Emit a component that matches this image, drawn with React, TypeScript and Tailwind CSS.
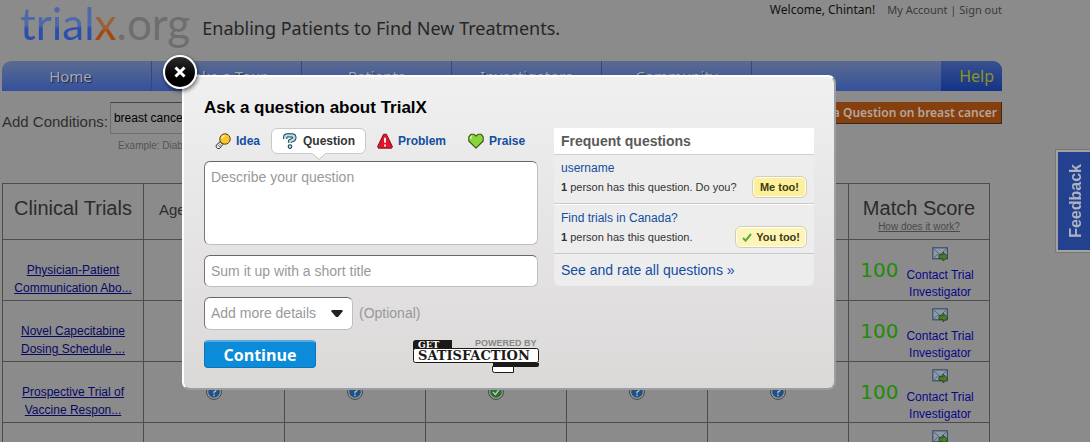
import { useState } from 'react'
import type { ReactNode } from 'react'

const navItems = ['Home', 'Take a Tour', 'Patients', 'Investigators', 'Community']

const trials = [
  { id: 1, title: ['Physician-Patient', 'Communication Abo...'], score: 100 },
  { id: 2, title: ['Novel Capecitabine', 'Dosing Schedule ...'], score: 100 },
  { id: 3, title: ['Prospective Trial of', 'Vaccine Respon...'], score: 100 },
  { id: 4, title: ['Phase II Study of', 'Breast Cancer ...'], score: 100 },
]

const criteria = ['unknown', 'unknown', 'match', 'unknown', 'unknown']

function BulbIcon() {
  return (
    <svg width="16" height="16" viewBox="0 0 16 16">
      <path d="M5.2 8.6 1.2 12.2v2l1.4 1.3h2l3.2-4z" fill="#eee" stroke="#333" strokeWidth="1" />
      <path d="m2.6 11.6 2.6 2.6M3.9 10.4l2.4 2.4" stroke="#555" strokeWidth=".8" />
      <circle cx="10" cy="6" r="5.2" fill="#fcc62a" stroke="#5a4410" strokeWidth="1" />
      <path d="M7 5.4A3.4 3.4 0 0 1 10 2.6" fill="none" stroke="#fff3b0" strokeWidth="1.4" />
    </svg>
  )
}

function QuestionIcon() {
  const d = 'M3.2 6V4.4Q3.2 2.4 5.4 2.4h4.2q2.8 0 2.8 2.2T9.8 7.3L8 8.2v1.6'
  return (
    <svg width="16" height="16" viewBox="0 0 16 16" fill="none">
      <path d={d} stroke="#1d3540" strokeWidth="4.2" strokeLinejoin="round" />
      <circle cx="8" cy="13.6" r="2.3" fill="#1d3540" />
      <path d={d} stroke="#a9e2f2" strokeWidth="2.4" strokeLinejoin="round" />
      <circle cx="8" cy="13.6" r="1.3" fill="#a9e2f2" />
    </svg>
  )
}

function ProblemIcon() {
  return (
    <svg width="16" height="16" viewBox="0 0 16 16">
      <path d="M6.6 1.2h2.8l6 12.4-.8 1.6H1.4l-.8-1.6z" fill="#e2142d" stroke="#7d1420" strokeWidth="1" />
      <path d="M8 4.8v5M8 11.4v2" stroke="#fff" strokeWidth="1.8" />
    </svg>
  )
}

function HeartIcon() {
  return (
    <svg width="16" height="16" viewBox="0 0 16 16">
      <path
        d="M8 15.2.8 8V3.8L3 1.2h2.8L8 3.2l2.2-2H13l2.2 2.6V8z"
        fill="#8ad43c"
        stroke="#35551a"
        strokeWidth="1.1"
        strokeLinejoin="round"
      />
      <path d="M2.6 6V4.4L3.8 3" fill="none" stroke="#d6f5ae" strokeWidth="1.4" />
    </svg>
  )
}

function MailIcon() {
  return (
    <svg width="17" height="15" viewBox="0 0 17 15" className="mx-auto block">
      <rect x=".8" y=".8" width="14.6" height="11" fill="#8d99a6" stroke="#3a5068" strokeWidth="1.2" />
      <path d="m1.4 1.6 6.7 6 6.7-6M1.4 11.4l5-5M14.8 11.4l-5-5" fill="none" stroke="#52667c" />
      <path d="M7 7.6h4V5.2l5 4.4-5 4.4v-2.4H7z" fill="#4a7a2c" stroke="#29481a" strokeWidth=".9" />
    </svg>
  )
}

function StatusIcon({ kind }: { kind: string }) {
  return (
    <svg width="16" height="16" viewBox="0 0 16 16" className="mx-auto block">
      <circle cx="8" cy="8" r="7.4" fill="#a0a0a0" stroke="#3c4248" strokeWidth="1" />
      <circle cx="8" cy="8" r="5.8" fill={kind === 'match' ? '#2c6e28' : '#205084'} />
      {kind === 'match' ? (
        <path d="m5 8 2.4 2.6L11.4 5" fill="none" stroke="#b4c8b0" strokeWidth="1.6" />
      ) : (
        <path d="M6 6q0-1.8 2-1.8T10 6q0 1.2-2 2v1.4M8 10.6v1.6" fill="none" stroke="#a9bccc" strokeWidth="1.4" />
      )}
    </svg>
  )
}

function SatisfactionLogo() {
  return (
    <svg width="126" height="35" viewBox="0 0 126 35">
      <path d="M0 10V3q0-3 3-3h36v10z" fill="#1c1a19" />
      <rect x=".5" y="8.5" width="125" height="14" rx="2" fill="#fff" stroke="#1c1a19" />
      <path d="M80 23h46v2q0 2-2 2H80z" fill="#1c1a19" />
      <path d="M79.5 26.5h21v6h-19q-2 0-2-2z" fill="#fff" stroke="#1c1a19" />
      <text x="5" y="8" fontSize="9" fontWeight="bold" fill="#fff" fontFamily="DejaVu Serif, serif">GET</text>
      <text x="5" y="20" fontSize="13" fontWeight="bold" fill="#1c1a19" fontFamily="DejaVu Serif, serif">SATISFACTION</text>
      <text x="62" y="6" fontSize="9" fontWeight="bold" fill="#858585" fontFamily="Liberation Sans, sans-serif">POWERED BY</text>
    </svg>
  )
}

const tabs: { name: string; icon: ReactNode }[] = [
  { name: 'Idea', icon: <BulbIcon /> },
  { name: 'Question', icon: <QuestionIcon /> },
  { name: 'Problem', icon: <ProblemIcon /> },
  { name: 'Praise', icon: <HeartIcon /> },
]

function Header() {
  return (
    <header className="flex h-[61px] justify-between">
      <div className="flex items-start pl-[18px]">
        <a href="#" className="text-[44px] leading-[46px] font-[Lato,sans-serif]">
          <span className="bg-linear-to-b from-[#4d69a8] from-55% to-[#2b4fae] to-60% bg-clip-text text-transparent">trial</span>
          <span className="bg-linear-to-b from-[#9c6138] from-60% to-[#a3480a] to-65% bg-clip-text text-transparent">x</span>
          <span className="text-[#6e6e6e]">.org</span>
        </a>
        <p className="pt-4 pl-3 text-[18px] leading-6 text-[#262626]">Enabling Patients to Find New Treatments.</p>
      </div>
      <div className="flex items-baseline gap-3 self-start pt-px text-[11px] leading-[18px] text-[#3a3a3a]">
        <span className="text-[12px] text-[#111]">Welcome, Chintan!</span>
        <span>
          <a href="#">My Account</a> | <a href="#">Sign out</a>
        </span>
      </div>
    </header>
  )
}

function Nav() {
  return (
    <nav className="flex h-[30px] overflow-hidden rounded-t-[9px] bg-linear-to-b from-[#5b6a8f] to-[#34509c] text-[15px] leading-[30px] text-[#a3a8b3]">
      {navItems.map((item) => (
        <a
          key={item}
          href="#"
          className="w-[150px] border-r border-[#34487e] text-center text-shadow-[1px_1px_1px_#1b2545] first:pr-3"
        >
          {item}
        </a>
      ))}
      <a href="#" className="ml-auto bg-linear-to-b from-[#3a5090] to-[#123387] pr-2 pl-[18px] text-[16px] text-[#8c9420]">
        Help
      </a>
    </nav>
  )
}

function TrialsTable() {
  return (
    <table className="w-full max-w-[988px] table-fixed border-collapse text-center font-['Liberation_Sans',Arial,sans-serif] text-[12px] leading-[18px]">
      <thead>
        <tr className="h-14 text-[#2b2b2b] *:border *:border-[#4c4c4c] *:p-0 *:font-normal">
          <th className="pb-2! text-[20px]">Clinical Trials</th>
          <th className="pb-1! text-[15px]">Age and Gender</th>
          <th />
          <th />
          <th />
          <th />
          <th className="pt-[10px]!">
            <div className="text-[20px] leading-5">Match Score</div>
            <a href="#" className="block text-[10px] leading-[18px] text-[#4a4a4a] underline">How does it work?</a>
          </th>
        </tr>
      </thead>
      <tbody>
        {trials.map((trial) => (
          <tr key={trial.id} className="h-[61px] *:border *:border-[#4c4c4c] *:p-0">
            <td className="pt-[18px]!">
              <a href="#" className="text-[#080865] underline">
                {trial.title[0]}
                <br />
                {trial.title[1]}
              </a>
            </td>
            {criteria.map((kind, i) => (
              <td key={i}>
                <StatusIcon kind={kind} />
              </td>
            ))}
            <td>
              <div className="flex items-center justify-center gap-2 pr-1">
                <span className="font-['DejaVu_Sans',sans-serif] text-[20px] text-[#238a08]">{trial.score}</span>
                <a href="#" className="pt-[7px] text-[#08088a]">
                  <MailIcon />
                  <span className="block pt-1">Contact Trial</span>
                  <span className="block leading-4">Investigator</span>
                </a>
              </div>
            </td>
          </tr>
        ))}
      </tbody>
    </table>
  )
}

function FrequentQuestions() {
  return (
    <section className="w-[260px] self-start overflow-hidden rounded-b-md bg-[#ededed] text-[#333]">
      <h3 className="border-b border-[#cfcfcf] bg-white px-[7px] text-[14px] leading-[26px] font-bold text-[#5a5a5a]">
        Frequent questions
      </h3>
      <div className="border-b border-[#c8c8c8] px-[7px] py-[5px]">
        <a href="#" className="block text-[12px] leading-4 text-[#124ea2]">username</a>
        <div className="flex items-center justify-between text-[11px] leading-[22px]">
          <p><b>1</b> person has this question. Do you?</p>
          <button className="h-[22px] rounded-md border border-[#d3cfae] bg-[#fdf09c] px-[7px] text-[11px] leading-5 font-bold text-[#403a10] ring-1 ring-white ring-inset">
            Me too!
          </button>
        </div>
      </div>
      <div className="border-y border-t-white border-b-[#c8c8c8] px-[7px] py-[5px]">
        <a href="#" className="block text-[12px] leading-4 text-[#124ea2]">Find trials in Canada?</a>
        <div className="flex items-center justify-between text-[11px] leading-[22px]">
          <p><b>1</b> person has this question.</p>
          <button className="flex h-[22px] items-center gap-1 rounded-md border border-[#d3cfae] bg-[#fdf5b8] px-[6px] text-[11px] leading-5 font-bold text-[#403a10] ring-1 ring-white ring-inset">
            <svg width="10" height="9" viewBox="0 0 10 9">
              <path d="m1 5 2.6 2.6L9 1" fill="none" stroke="#55ab3c" strokeWidth="2" />
            </svg>
            You too!
          </button>
        </div>
      </div>
      <a href="#" className="block px-[7px] text-[14px] leading-8 text-[#124ea2]">See and rate all questions »</a>
    </section>
  )
}

function AskDialog() {
  const [active, setActive] = useState('Question')
  const field = 'block w-full rounded-md border border-[#c0c0c0] border-t-[#666] border-l-[#777] bg-white px-[6px] text-[14px] placeholder:text-[#999] placeholder:opacity-100'

  return (
    <div
      role="dialog"
      aria-labelledby="ask-title"
      className="absolute top-[75px] left-[182px] w-[654px] rounded-lg border-2 border-white border-r-[#9b9da1] border-b-[#9b9da1] bg-linear-to-b from-[#f0f0f0] to-[#dbd8d8] px-5 pt-[21px] pb-[13px] font-['Liberation_Sans',Arial,sans-serif]"
    >
      <button
        aria-label="Close"
        className="absolute -top-[22px] -left-[21px] flex size-[34px] items-center justify-center rounded-full border-2 border-white bg-linear-to-b from-[#2c2c2c] to-black shadow-[1px_2px_4px_rgba(0,0,0,0.6)]"
      >
        <svg width="12" height="12" viewBox="0 0 12 12">
          <path d="m1.5 1.5 9 9M10.5 1.5l-9 9" stroke="#fff" strokeWidth="3" />
        </svg>
      </button>

      <h2 id="ask-title" className="text-[17px] leading-5 font-bold text-black">Ask a question about TrialX</h2>

      <div className="flex gap-4 pt-[10px]">
        <form className="flex-1" onSubmit={(e) => e.preventDefault()}>
          <div className="flex">
            {tabs.map((tab) => (
              <button
                key={tab.name}
                type="button"
                onClick={() => setActive(tab.name)}
                className={`relative flex h-[26px] items-center gap-[5px] rounded-md border px-[10px] text-[12px] font-bold ${
                  active === tab.name
                    ? 'border-[#c9c9c9] bg-white text-[#333]'
                    : 'border-transparent text-[#124ea2]'
                }`}
              >
                {tab.icon}
                {tab.name}
                {active === tab.name && (
                  <svg width="14" height="7" viewBox="0 0 14 7" className="absolute top-6 left-1/2 -translate-x-1/2">
                    <path d="M0 0h14L7 6.5z" fill="#fff" />
                    <path d="m.5.5 6.5 6 6.5-6" fill="none" stroke="#c0c0c0" />
                  </svg>
                )}
              </button>
            ))}
          </div>

          <textarea aria-label="Describe your question" placeholder="Describe your question" className={`${field} mt-[7px] h-[84px] resize-none pt-[5px] leading-5`} />
          <input aria-label="Title" placeholder="Sum it up with a short title" className={`${field} mt-[10px] h-8`} />
          <div className="mt-[10px] flex items-center gap-[6px] text-[14px] text-[#999]">
            <div className="relative w-[149px]">
              <select aria-label="Add more details" className={`${field} h-[33px] appearance-none`}>
                <option>Add more details</option>
              </select>
              <svg width="12" height="7" viewBox="0 0 12 7" className="pointer-events-none absolute top-[13px] right-[10px]">
                <path d="M1 0h10l1 1-5 6H5L0 1z" fill="#222" />
              </svg>
            </div>
            <span>(Optional)</span>
          </div>
          <div className="mt-[10px] flex items-start justify-between">
            <button className="h-7 w-28 rounded border border-t-2 border-[#0a76b8] border-t-[#58aade] bg-[#0b8bd8] font-['Open_Sans',sans-serif] text-[16px] leading-6 font-bold text-white">
              Continue
            </button>
            <a href="#" aria-label="Powered by Get Satisfaction" className="-mr-px">
              <SatisfactionLogo />
            </a>
          </div>
        </form>
        <FrequentQuestions />
      </div>
    </div>
  )
}

export default function App() {
  return (
    <div className="relative h-screen overflow-hidden bg-[#8b8b8b] pl-[2px] font-['Noto_Sans','Open_Sans',sans-serif]">
      <div className="w-full max-w-[1000px]">
        <Header />
        <Nav />
        <div className="flex items-start justify-between pt-[11px]">
          <div className="flex items-start gap-[2px] font-['Liberation_Sans',Arial,sans-serif]">
            <label htmlFor="condition" className="pt-[10px] text-[15px] leading-5 text-[#2f2f2f]">Add Conditions:</label>
            <div>
              <input
                id="condition"
                defaultValue="breast cancer"
                className="block h-8 w-[240px] border border-[#6e6e6e] border-t-[#444] bg-[#8b8b8b] px-[3px] text-[12px] text-black"
              />
              <p className="pt-1 pl-2 text-[10px] leading-4 text-[#555]">Example: Diabetes, Breast Cancer</p>
            </div>
          </div>
          <button className="h-[22px] border-r border-b border-[#3b2a1c] bg-[#86400f] px-1 text-[12px] leading-5 font-semibold text-[#b3a79c]">
            Ask a Question on breast cancer
          </button>
        </div>
        <div className="pt-[29px]">
          <TrialsTable />
        </div>
      </div>

      <button className="absolute top-[150px] right-0 border-2 border-r-0 border-[#a2a2a2] bg-[#23418f] py-3 pr-[3px] pl-[7px] font-['Liberation_Sans',Arial,sans-serif] text-[16px] leading-[22px] font-bold text-[#adb3c2] outline outline-[#777]">
        <span className="block rotate-180 [writing-mode:vertical-rl]">Feedback</span>
      </button>

      <AskDialog />
    </div>
  )
}
